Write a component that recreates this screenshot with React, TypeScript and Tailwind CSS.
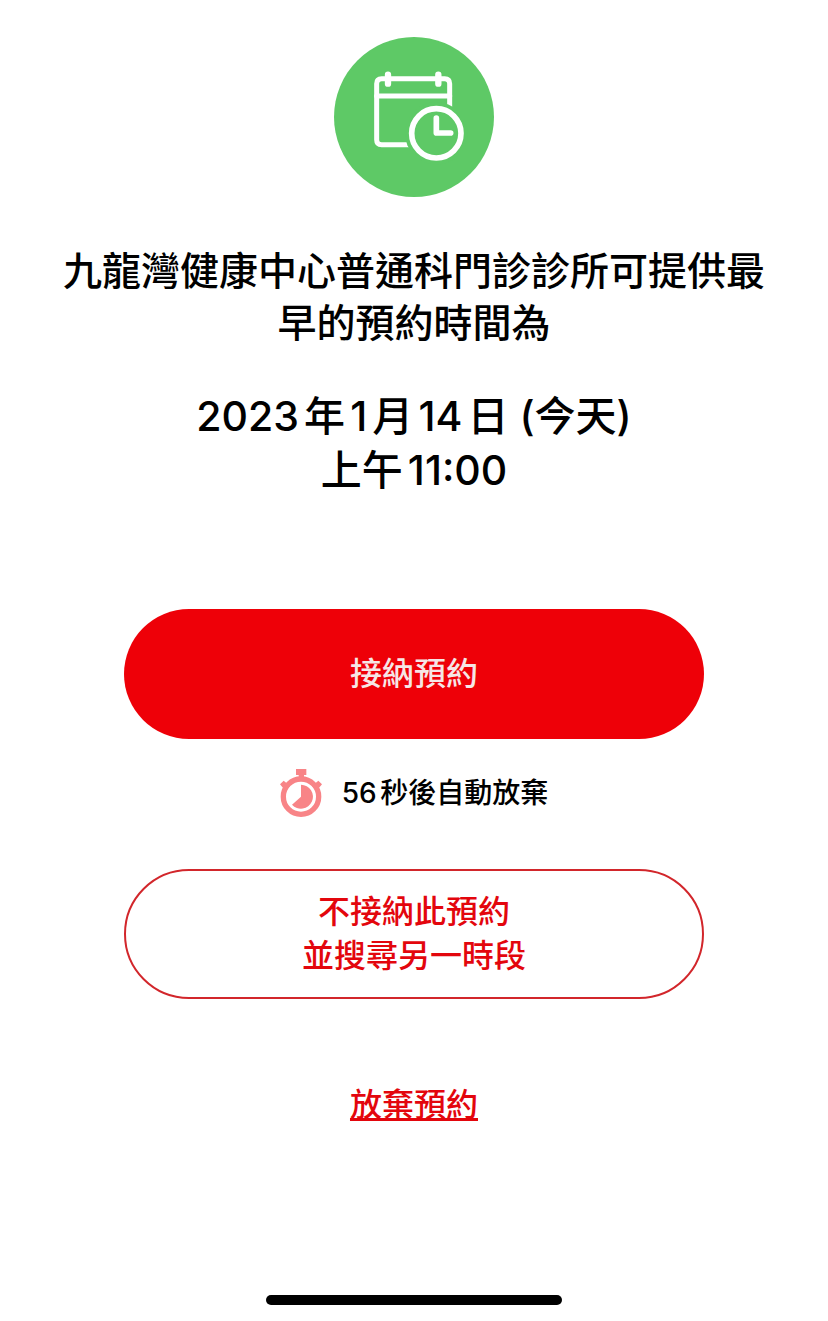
import React from 'react';

const CalendarClockIcon: React.FC = () => (
  <svg viewBox="0 0 480 480" className="size-40" fill="none" aria-hidden="true">
    <circle cx="240" cy="240" r="240" fill="#5ec966" />
    <g transform="translate(-30 -30)" stroke="#fff" strokeLinecap="round" strokeLinejoin="round">
      <path d="M262 353H173q-15 0-15-15V170q0-15 15-15H362q15 0 15 15V245" strokeWidth="15" />
      <path d="M158 207H377" strokeWidth="15" />
      <path d="M192 143V170M343 143V170" strokeWidth="19" />
      <circle cx="337" cy="319" r="94" fill="#5ec966" stroke="none" />
      <circle cx="337" cy="319" r="74" strokeWidth="17" />
      <path d="M337 273V318H380" strokeWidth="17" />
    </g>
  </svg>
);

const StopwatchIcon: React.FC = () => (
  <svg viewBox="26 21 126 144" className="h-12 w-[42px]" fill="#f88487" aria-hidden="true">
    <path d="M74 21H105V39H98V52H82V39H74Z" />
    <path d="M26 67L37 56L56 72L42 86ZM152 67L141 56L122 72L136 86Z" />
    <circle cx="89" cy="104" r="53" fill="none" stroke="#f88487" strokeWidth="16" />
    <path d="M89 104V68A36 36 0 1 1 62 128Z" />
  </svg>
);

interface AppointmentOfferProps {
  clinic: string;
  date: string;
  time: string;
  seconds: number;
}

const AppointmentOffer: React.FC<AppointmentOfferProps> = ({ clinic, date, time, seconds }) => (
  <main className="flex w-full flex-col items-center px-14 text-center">
    <h1 className="mt-12 text-[39px] leading-[52px]">{`${clinic}可提供最早的預約時間為`}</h1>

    <p className="mt-10 text-[41px] leading-[54px] [text-autospace:normal]">
      {date}
      <br />
      {time}
    </p>

    <button
      type="button"
      className="mt-28 h-[130px] w-full max-w-[580px] rounded-full bg-[#ee0008] text-[32px] leading-[44px] text-[#f6e6e6]"
    >
      接納預約
    </button>

    <div className="mt-[30px] flex items-center gap-5">
      <StopwatchIcon />
      <span className="text-[28px] leading-10 [text-autospace:normal]">{`${seconds}秒後自動放棄`}</span>
    </div>

    <button
      type="button"
      className="mt-[52px] h-[130px] w-full max-w-[580px] rounded-full border-2 border-[#d2262b] text-[32px] leading-[44px] text-[#e3060d]"
    >
      不接納此預約
      <br />
      並搜尋另一時段
    </button>

    <a href="#" className="mt-[84px] text-[32px] leading-[44px] text-[#e3060d] underline">
      放棄預約
    </a>
  </main>
);

export default function App() {
  return (
    <div className="flex min-h-screen flex-col items-center bg-white pt-[37px] pb-4 font-['Inter','Noto_Sans_CJK_TC',sans-serif] font-medium text-black">
      <CalendarClockIcon />
      <AppointmentOffer
        clinic="九龍灣健康中心普通科門診診所"
        date="2023年1月14日 (今天)"
        time="上午11:00"
        seconds={56}
      />
      <div className="mt-auto h-[10px] w-[296px] rounded-full bg-black" />
    </div>
  );
}
